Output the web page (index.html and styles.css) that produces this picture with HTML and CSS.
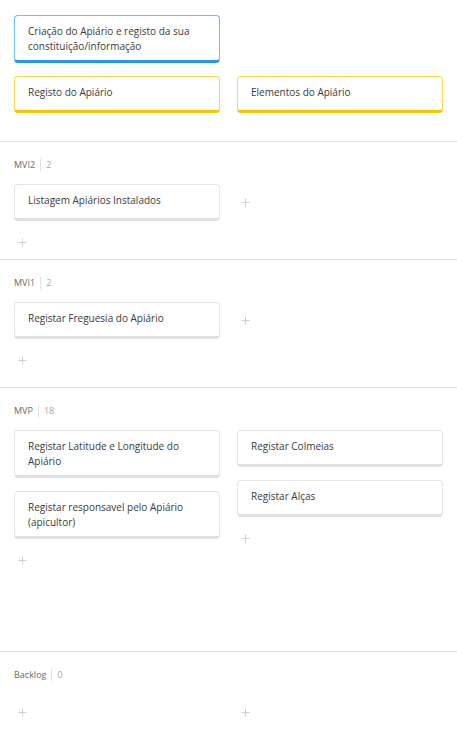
FILE: index.html
```html
<!DOCTYPE html>
<html lang="pt">
<head>
<meta charset="utf-8">
<title>Story map</title>
<link rel="stylesheet" href="styles.css">
</head>
<body>
<div class="board">
  <section class="row row--top">
    <div class="cols">
      <div class="col">
        <div class="card card--blue">Criação do Apiário e registo da sua constituição/informação</div>
      </div>
      <div class="col"></div>
    </div>
    <div class="cols">
      <div class="col">
        <div class="card card--yellow">Registo do Apiário</div>
      </div>
      <div class="col">
        <div class="card card--yellow">Elementos do Apiário</div>
      </div>
    </div>
  </section>

  <section class="row row--mvi2">
    <div class="label"><span class="name">MVI2</span><span class="count">2</span></div>
    <div class="cols">
      <div class="col">
        <div class="card">Listagem Apiários Instalados</div>
        <div class="add"><svg viewBox="0 0 9 9" width="9" height="9"><path d="M4.5 0.5v8M0.5 4.5h8"/></svg></div>
      </div>
      <div class="col">
        <div class="add"><svg viewBox="0 0 9 9" width="9" height="9"><path d="M4.5 0.5v8M0.5 4.5h8"/></svg></div>
      </div>
    </div>
  </section>

  <section class="row row--mvi1">
    <div class="label"><span class="name">MVI1</span><span class="count">2</span></div>
    <div class="cols">
      <div class="col">
        <div class="card">Registar Freguesia do Apiário</div>
        <div class="add"><svg viewBox="0 0 9 9" width="9" height="9"><path d="M4.5 0.5v8M0.5 4.5h8"/></svg></div>
      </div>
      <div class="col">
        <div class="add"><svg viewBox="0 0 9 9" width="9" height="9"><path d="M4.5 0.5v8M0.5 4.5h8"/></svg></div>
      </div>
    </div>
  </section>

  <section class="row row--mvp">
    <div class="label"><span class="name">MVP</span><span class="count">18</span></div>
    <div class="cols">
      <div class="col">
        <div class="card">Registar Latitude e Longitude do Apiário</div>
        <div class="card">Registar responsavel pelo Apiário (apicultor)</div>
        <div class="add"><svg viewBox="0 0 9 9" width="9" height="9"><path d="M4.5 0.5v8M0.5 4.5h8"/></svg></div>
      </div>
      <div class="col">
        <div class="card">Registar Colmeias</div>
        <div class="card">Registar Alças</div>
        <div class="add"><svg viewBox="0 0 9 9" width="9" height="9"><path d="M4.5 0.5v8M0.5 4.5h8"/></svg></div>
      </div>
    </div>
  </section>

  <section class="row row--backlog">
    <div class="label"><span class="name">Backlog</span><span class="count">0</span></div>
    <div class="cols">
      <div class="col">
        <div class="add"><svg viewBox="0 0 9 9" width="9" height="9"><path d="M4.5 0.5v8M0.5 4.5h8"/></svg></div>
      </div>
      <div class="col">
        <div class="add"><svg viewBox="0 0 9 9" width="9" height="9"><path d="M4.5 0.5v8M0.5 4.5h8"/></svg></div>
      </div>
    </div>
  </section>
</div>
</body>
</html>
```

FILE: styles.css
```css
* { box-sizing: border-box; }

html, body {
  margin: 0;
  padding: 0;
  background: #ffffff;
}

body {
  font-family: "Open Sans", "Noto Sans", sans-serif;
  font-size: 10px;
  color: #3a3a3a;
  width: 457px;
  height: 753px;
  overflow: hidden;
}

.board {
  display: flex;
  flex-direction: column;
}

.row {
  padding: 17px 14px 0 14px;
  border-top: 1px solid #e2e2e2;
  display: flex;
  flex-direction: column;
}

.row--top {
  border-top: none;
  padding-top: 15px;
  height: 141px;
  gap: 13px;
}

.row--mvi2 { height: 118px; }
.row--mvi1 { height: 128px; }
.row--mvp { height: 264px; }
.row--backlog { flex: 1; }

.label {
  display: flex;
  align-items: center;
  height: 12px;
  line-height: 12px;
  font-size: 9px;
  color: #6a6a6a;
  margin-bottom: 13px;
}

.label .name {
  padding-right: 5px;
  border-right: 1px solid #e0e0e0;
  height: 12px;
}

.label .count {
  padding-left: 5px;
  color: #a8a8a8;
}

.cols {
  display: grid;
  grid-template-columns: 206px 206px;
  column-gap: 17px;
}

.col {
  display: flex;
  flex-direction: column;
  gap: 13px;
}

.card {
  min-height: 37px;
  padding: 8px 13px 6px 13px;
  line-height: 15px;
  border: 1px solid #e6e6e6;
  border-bottom: 3px solid #e0e0e0;
  border-radius: 4px;
  background: #ffffff;
  color: #3a3a3a;
}

.card--blue {
  border-color: #6cbcf5;
  border-bottom-color: #2196f3;
}

.card--yellow {
  border-color: #ffd54a;
  border-bottom-color: #f7c600;
}

.add {
  height: 9px;
  padding-left: 4px;
  margin-top: 4px;
  display: flex;
}

.add:first-child {
  margin-top: 14px;
}

.col .add svg {
  display: block;
}

.add path {
  stroke: #cfcfcf;
  stroke-width: 1;
  fill: none;
}
```
